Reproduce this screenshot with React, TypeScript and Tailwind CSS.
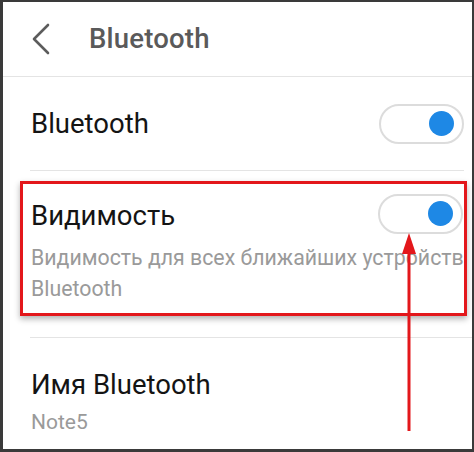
import React from "react";

function Toggle() {
  return (
    <div className="w-[85px] h-[40px] rounded-full border-2 border-[#dcdcdc] bg-white flex items-center justify-end pr-[8px] shrink-0">
      <div className="w-[25px] h-[25px] rounded-full bg-[#1e88e5]" />
    </div>
  );
}

export default function App() {
  return (
    <div
      className="relative w-[474px] h-[452px] bg-white border-l-[3px] border-t-2 border-r-2 border-b-[3px] border-[#3a3a3a] overflow-hidden"
      style={{ fontFamily: "Roboto, 'Noto Sans', sans-serif" }}
    >
      {/* header */}
      <div className="h-[75px] flex items-center border-b border-[#e4e4e4]">
        <svg width="20" height="32" viewBox="0 0 20 32" className="ml-[28px] shrink-0">
          <path d="M17 2 L3 16 L17 30" fill="none" stroke="#5c5c5c" strokeWidth="2.6" strokeLinecap="round" strokeLinejoin="round" />
        </svg>
        <span className="ml-[38px] text-[27.5px] font-medium text-[#5a5a5a] tracking-[0.2px]">Bluetooth</span>
      </div>

      {/* bluetooth row */}
      <div className="ml-[27px] mr-[8px] h-[94px] flex items-center justify-between border-b border-[#e4e4e4]">
        <span className="ml-[1px] text-[27.5px] text-[#141414]">Bluetooth</span>
        <Toggle />
      </div>

      {/* visibility (highlighted) */}
      <div className="mt-[10px] ml-[17px] mr-[5px] border-[3px] border-[#e3171b] pl-[8px] pr-[1px] pt-[7px] pb-[9px] shadow-[0_3px_6px_rgba(0,0,0,0.3)]">
        <div className="flex items-center justify-between">
          <span className="text-[27.5px] text-[#141414] mt-[4px]">Видимость</span>
          <Toggle />
        </div>
        <div className="mt-[6px] text-[21.3px] leading-[31px] text-[#9a9a9a] whitespace-nowrap">
          Видимость для всех ближайших устройств
          <br />
          Bluetooth
        </div>
      </div>

      {/* divider */}
      <div className="mt-[21px] ml-[27px] border-t border-[#e4e4e4]" />

      {/* name row */}
      <div className="ml-[28px] pt-[29px]">
        <div className="text-[27.5px] leading-[36px] text-[#141414]">Имя Bluetooth</div>
        <div className="mt-[5px] text-[21px] leading-[28px] text-[#9a9a9a]">Note5</div>
      </div>

      {/* red arrow overlay */}
      <svg className="absolute left-[393px] top-[228px]" width="26" height="204" viewBox="0 0 26 204">
        <line x1="13" y1="18" x2="13" y2="201" stroke="#e3171b" strokeWidth="3" />
        <polygon points="13,3 6,24 20,24" fill="#e3171b" />
      </svg>
    </div>
  );
}
